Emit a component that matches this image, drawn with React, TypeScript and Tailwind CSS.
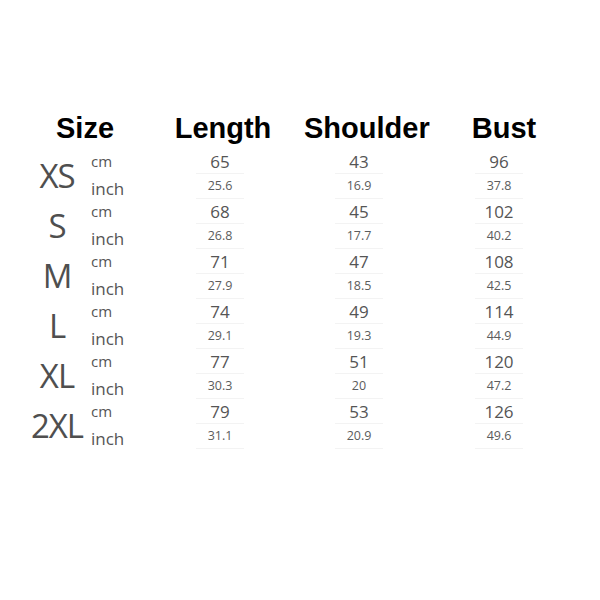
import React from "react";

const rows = [
  { size: "XS", cm: ["65", "43", "96"], inch: ["25.6", "16.9", "37.8"] },
  { size: "S", cm: ["68", "45", "102"], inch: ["26.8", "17.7", "40.2"] },
  { size: "M", cm: ["71", "47", "108"], inch: ["27.9", "18.5", "42.5"] },
  { size: "L", cm: ["74", "49", "114"], inch: ["29.1", "19.3", "44.9"] },
  { size: "XL", cm: ["77", "51", "120"], inch: ["30.3", "20", "47.2"] },
  { size: "2XL", cm: ["79", "53", "126"], inch: ["31.1", "20.9", "49.6"] },
];

const valueFont = { fontFamily: '"Open Sans", "Noto Sans", sans-serif' };

export default function App() {
  return (
    <div className="w-[600px] h-[600px] bg-white pt-[110px]">
      <div
        className="grid grid-cols-[28px_114px_162px_120px_160px] h-[36px] items-center text-black font-bold text-[29px] leading-none"
        style={{ fontFamily: '"Liberation Sans", Arial, sans-serif' }}
      >
        <div />
        <div className="text-center">Size</div>
        <div className="text-center">Length</div>
        <div className="text-center">Shoulder</div>
        <div className="text-center">Bust</div>
      </div>
      <div className="mt-[3px] flex flex-col text-[#555]" style={valueFont}>
        {rows.map((r) => (
          <div key={r.size} className="grid grid-cols-[22px_70px_58px_140px_138px_142px] h-[50px]">
            <div />
            <div className="flex items-center justify-center text-[33px] font-medium leading-none tracking-[-1px] pt-[3px] text-[#4f4f4f]">
              {r.size}
            </div>
            <div className="flex flex-col -ml-[1px]">
              <div className="h-[25px] flex items-center text-[15px] leading-none">cm</div>
              <div className="h-[25px] flex items-center text-[17px] leading-none pt-[4px]">inch</div>
            </div>
            {[0, 1, 2].map((i) => (
              <div key={i} className="flex flex-col items-center">
                <div className="h-[25px] w-[48px] flex items-center justify-center text-[17px] leading-none border-b border-[#f3f3f3]">
                  {r.cm[i]}
                </div>
                <div className="h-[25px] w-[48px] flex items-center justify-center text-[12.5px] leading-none text-[#5c5c5c] border-b border-[#f3f3f3]">
                  {r.inch[i]}
                </div>
              </div>
            ))}
          </div>
        ))}
      </div>
    </div>
  );
}
